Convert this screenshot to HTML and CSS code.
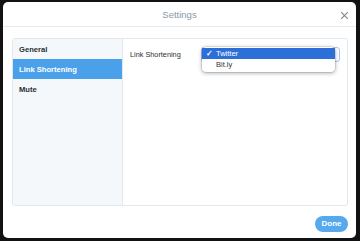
FILE: index.html
```html
<!DOCTYPE html>
<html>
<head>
<meta charset="utf-8">
<link rel="stylesheet" href="styles.css">
</head>
<body>
<div class="modal">
  <div class="header">
    <div class="title">Settings</div>
    <svg class="close" width="9" height="9" viewBox="0 0 9 9"><path d="M1.2 1.2L7.8 7.8M7.8 1.2L1.2 7.8" stroke="#7d8890" stroke-width="1.1" fill="none"/></svg>
  </div>
  <div class="body">
    <div class="panel">
      <div class="sidebar">
        <div class="item">General</div>
        <div class="item active">Link Shortening</div>
        <div class="item">Mute</div>
      </div>
      <div class="content">
        <div class="row">
          <div class="label">Link Shortening</div>
          <div class="select">
            <div class="menu">
              <div class="opt selected"><span class="check">✓</span>Twitter</div>
              <div class="opt"><span class="check"></span>Bit.ly</div>
            </div>
          </div>
        </div>
      </div>
    </div>
  </div>
  <div class="footer">
    <div class="done">Done</div>
  </div>
</div>
</body>
</html>
```
FILE: styles.css
```css
html, body { margin: 0; padding: 0; }
body {
  width: 360px;
  height: 241px;
  background: #121212;
  font-family: "Liberation Sans", Arial, sans-serif;
  padding: 2px 4px 3px 3px;
  box-sizing: border-box;
  overflow: hidden;
}
.modal {
  width: 353px;
  height: 236px;
  background: #fff;
  border-radius: 5px;
  display: flex;
  flex-direction: column;
  overflow: hidden;
}
.header {
  height: 24px;
  border-bottom: 1px solid #e6ecf0;
  display: flex;
  align-items: center;
  justify-content: center;
  position: relative;
  flex: none;
}
.title {
  font-size: 9.5px;
  color: #8899a6;
  margin-top: 1px;
}
.close {
  position: absolute;
  right: 7px;
  top: 9px;
}
.body {
  padding: 11px 8px 0 9px;
  flex: none;
}
.panel {
  height: 168px;
  box-sizing: border-box;
  border: 1px solid #e1e8ed;
  border-radius: 3px;
  display: flex;
  overflow: visible;
}
.sidebar {
  width: 109px;
  background: #f5f8fa;
  border-right: 1px solid #e1e8ed;
  flex: none;
  border-radius: 3px 0 0 3px;
}
.item {
  height: 20px;
  line-height: 21px;
  padding-left: 6px;
  font-size: 7.6px;
  font-weight: bold;
  color: #292f33;
}
.item.active {
  background: #4aa1ea;
  color: #fff;
}
.content {
  flex: 1;
  padding: 8px 0 0 7px;
}
.row {
  display: flex;
  align-items: center;
  height: 15px;
}
.label {
  font-size: 7.3px;
  color: #292f33;
  width: 71px;
}
.select {
  width: 139px;
  height: 15px;
  box-sizing: border-box;
  border: 1px solid #a9c8ee;
  border-radius: 3px;
  background: #fff;
  position: relative;
}
.menu {
  position: absolute;
  left: 0px;
  top: -1px;
  width: 133px;
  background: #fff;
  border-radius: 4px;
  box-shadow: 0 1px 4px rgba(0,0,0,0.35), 0 0 0 0.5px rgba(0,0,0,0.15);
  padding: 1px 0 2px;
}
.opt {
  height: 11px;
  line-height: 11px;
  font-size: 7.5px;
  color: #333;
  display: flex;
  align-items: center;
}
.opt.selected {
  background: #2d6fd8;
  color: #fff;
}
.check {
  width: 14px;
  text-align: center;
  font-size: 8px;
  font-weight: bold;
}
.footer {
  display: flex;
  justify-content: flex-end;
  padding: 10px 8px 0 0;
}
.done {
  width: 33px;
  height: 16px;
  line-height: 16px;
  border-radius: 8px;
  background: #55a9ec;
  color: #fff;
  font-size: 8px;
  font-weight: bold;
  text-align: center;
}
```
